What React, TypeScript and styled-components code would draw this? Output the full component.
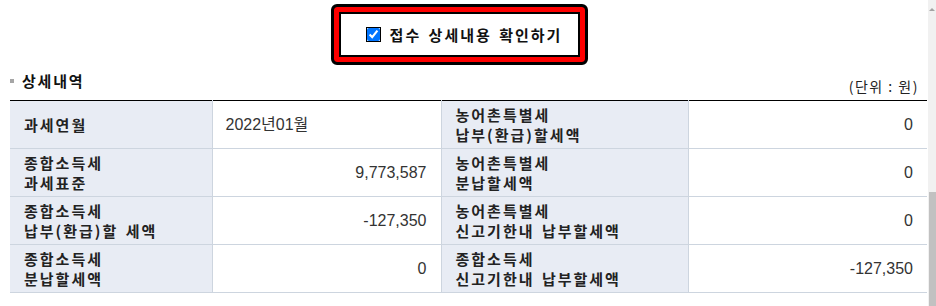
import React from 'react';
import styled, { createGlobalStyle } from 'styled-components';

const GlobalStyle = createGlobalStyle`
  html, body {
    margin: 0;
    padding: 0;
    background: #fff;
    overflow: hidden;
  }
  body {
    font-family: 'Noto Sans CJK KR', 'Liberation Sans', sans-serif;
    color: #222;
  }
`;

interface Row {
  label1: string[];
  value1: string;
  left1?: boolean;
  label2: string[];
  value2: string;
}

const rows: Row[] = [
  {
    label1: ['과세연월'],
    value1: '2022년01월',
    left1: true,
    label2: ['농어촌특별세', '납부(환급)할세액'],
    value2: '0',
  },
  {
    label1: ['종합소득세', '과세표준'],
    value1: '9,773,587',
    label2: ['농어촌특별세', '분납할세액'],
    value2: '0',
  },
  {
    label1: ['종합소득세', '납부(환급)할 세액'],
    value1: '-127,350',
    label2: ['농어촌특별세', '신고기한내 납부할세액'],
    value2: '0',
  },
  {
    label1: ['종합소득세', '분납할세액'],
    value1: '0',
    label2: ['종합소득세', '신고기한내 납부할세액'],
    value2: '-127,350',
  },
];

const App: React.FC = () => {
  return (
    <Page>
      <GlobalStyle />
      <Main>
        <ConfirmWrap>
          <ConfirmBox>
            <CheckLabel>
              <CheckInput type="checkbox" checked readOnly />
              <span>접수 상세내용 확인하기</span>
            </CheckLabel>
          </ConfirmBox>
        </ConfirmWrap>

        <TitleRow>
          <Title>상세내역</Title>
          <Unit>(단위 : 원)</Unit>
        </TitleRow>

        <DetailTable>
          <colgroup>
            <col style={{ width: 202 }} />
            <col style={{ width: 229 }} />
            <col style={{ width: 247 }} />
            <col />
          </colgroup>
          <tbody>
            {rows.map((row, i) => (
              <tr key={i}>
                <HeadCell>
                  {row.label1.map((l) => (
                    <div key={l}>{l}</div>
                  ))}
                </HeadCell>
                <ValueCell $left={row.left1}>{row.value1}</ValueCell>
                <HeadCell>
                  {row.label2.map((l) => (
                    <div key={l}>{l}</div>
                  ))}
                </HeadCell>
                <ValueCell>{row.value2}</ValueCell>
              </tr>
            ))}
          </tbody>
        </DetailTable>
      </Main>
      <ScrollTrack>
        <ScrollArrow />
        <ScrollThumb />
      </ScrollTrack>
    </Page>
  );
};

export default App;

const Page = styled.div`
  display: flex;
  width: 936px;
  height: 306px;
  overflow: hidden;
`;

const Main = styled.div`
  flex: 1;
  padding: 4px 1px 0 10px;
`;

const ConfirmWrap = styled.div`
  display: flex;
  justify-content: center;
  padding-right: 18px;
`;

const ConfirmBox = styled.div`
  width: 257px;
  height: 61px;
  box-sizing: border-box;
  border: 3px solid #000;
  border-radius: 6px;
  background: #000;
  box-shadow: inset 0 0 0 5px #f00;
  padding: 5px;
  display: flex;

  & > label {
    flex: 1;
    border: 2px solid #000;
    background: #fff;
  }
`;

const CheckLabel = styled.label`
  display: flex;
  align-items: center;
  justify-content: center;
  gap: 10px;
  padding-left: 10px;
  font-size: 15px;
  font-weight: bold;
  letter-spacing: 2px;
  word-spacing: 2px;
  color: #111;
`;

const CheckInput = styled.input`
  width: 13px;
  height: 13px;
  margin: 0;
  outline: 1px solid #000;
  outline-offset: 0px;
`;

const TitleRow = styled.div`
  display: flex;
  justify-content: space-between;
  align-items: flex-end;
  margin-top: 6px;
  padding-right: 8px;
`;

const Title = styled.h3`
  position: relative;
  margin: 0;
  padding: 0 0 5px 12px;
  font-size: 15px;
  line-height: 20px;
  font-weight: bold;
  letter-spacing: 1.8px;
  color: #111;

  &::before {
    content: '';
    position: absolute;
    left: 0;
    top: 8px;
    width: 4px;
    height: 4px;
    background: #a6a6a6;
  }
`;

const Unit = styled.span`
  font-size: 14px;
  line-height: 20px;
  letter-spacing: 1.5px;
  color: #222;
`;

const DetailTable = styled.table`
  width: 100%;
  margin-top: 4px;
  border-collapse: collapse;
  table-layout: fixed;
  border-top: 1px solid #000;
  border-bottom: 1px solid #cdd5df;
`;

const HeadCell = styled.th`
  height: 47px;
  padding: 0 10px 0 14px;
  background: #e8ecf4;
  border-top: 1px solid #cdd5df;
  border-right: 1px solid #cdd5df;
  text-align: left;
  vertical-align: middle;
  font-size: 15px;
  line-height: 20px;
  font-weight: bold;
  letter-spacing: 2px;
  word-spacing: 2px;
  color: #222;
  white-space: nowrap;

  tr:first-child > & {
    border-top: none;
  }
`;

const ValueCell = styled.td<{ $left?: boolean }>`
  height: 47px;
  padding: 0 14px 0 13px;
  border-top: 1px solid #cdd5df;
  border-right: 1px solid #cdd5df;
  text-align: ${(p) => (p.$left ? 'left' : 'right')};
  vertical-align: middle;
  font-family: 'Liberation Sans', 'Noto Sans CJK KR', sans-serif;
  font-size: 16px;
  line-height: 20px;
  color: #333;

  tr:first-child > & {
    border-top: none;
  }
  &:last-child {
    border-right: none;
  }
`;

const ScrollTrack = styled.div`
  position: relative;
  width: 8px;
  height: 306px;
  background: #f1f1f1;
  display: flex;
  flex-direction: column;
  justify-content: space-between;
`;

const ScrollArrow = styled.div`
  margin: 8px auto 0;
  width: 0;
  height: 0;
  border-left: 3px solid transparent;
  border-right: 3px solid transparent;
  border-bottom: 3px solid #a3a3a3;
`;

const ScrollThumb = styled.div`
  height: 114px;
  margin-left: 1px;
  background: #c1c1c1;
`;
